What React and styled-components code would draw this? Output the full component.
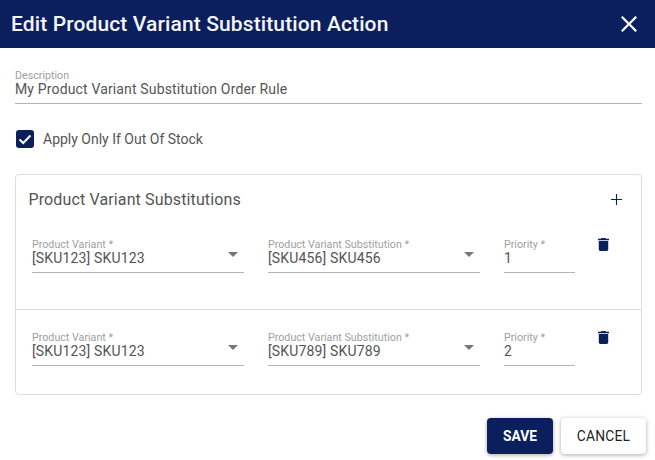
import React from "react";
import styled, { createGlobalStyle } from "styled-components";

const Global = createGlobalStyle`
  html, body { margin: 0; padding: 0; background: #fff; }
  body { font-family: Roboto, "Liberation Sans", sans-serif; width: 655px; height: 460px; overflow: hidden; }
  * { box-sizing: border-box; }
`;
const Dialog = styled.div`width: 655px; height: 460px; display: flex; flex-direction: column; background: #fff;`;
const Header = styled.header`height: 48px; background: #0a1f5c; color: #f4f5f8; display: flex; align-items: center; justify-content: space-between; padding: 0 18px 0 11px;`;
const Title = styled.h2`margin: 0; font-size: 21px; font-weight: 500; letter-spacing: 0.12px;`;
const Close = styled.button`border: 0; background: none; padding: 0; width: 16px; height: 16px; display: flex; color: #fff;`;
const Body = styled.div`flex: 1; display: flex; flex-direction: column; padding: 20px 9px 0 15px;`;
const Field = styled.div`display: flex; flex-direction: column; position: relative; width: ${p => p.$w || "100%"}; height: 36px; border-bottom: 1px solid #b5b5b5;`;
const Label = styled.label`font-size: 10.7px; line-height: 11px; color: #a0a0a0; padding-top: 2px;`;
const Value = styled.div`font-size: 14px; line-height: 16px; letter-spacing: 0.15px; color: #555;`;
const CheckRow = styled.div`display: flex; align-items: center; gap: 9px; margin-top: 25px; padding-left: 1px; height: 20px; font-size: 14px; color: #555; letter-spacing: 0;`;
const Box = styled.span`width: 18px; height: 18px; border-radius: 3px; background: #0a1f5c; display: flex;`;
const Card = styled.section`margin-top: 25px; width: 627px; height: 221px; border: 1px solid #ddd; border-radius: 4px;`;
const CardHead = styled.div`display: flex; align-items: center; justify-content: space-between; height: 48px; padding: 0 19px 0 12.5px; font-size: 16px; color: #555; letter-spacing: 0.13px;`;
const Row = styled.div`height: ${p => p.$h}px; display: grid; grid-template-columns: 212px 212px 71px 20px; column-gap: 24px; padding: ${p => p.$top}px 0 0 16px; border-bottom: ${p => p.$line ? "1px solid #ddd" : "0"};`;
const Arrow = styled.span`position: absolute; right: 6px; top: 15px; border-left: 5px solid transparent; border-right: 5px solid transparent; border-top: 5px solid #777;`;
const Trash = styled.span`display: flex; padding-top: 1px; margin-left: -1px;`;
const Footer = styled.footer`display: flex; justify-content: flex-end; gap: 8px; padding-top: 23px;`;
const Btn = styled.button`height: 36px; border: 0; border-radius: 4px; font: ${p => p.$primary ? 700 : 400} 13.8px Roboto, sans-serif; letter-spacing: ${p => p.$primary ? 0 : "0.2px"}; width: ${p => p.$w}px; background: ${p => p.$primary ? "#0a1f5c" : "#fff"}; color: ${p => p.$primary ? "#fff" : "#222"}; box-shadow: 0 1px 4px rgba(0,0,0,.35);`;

const TrashIcon = () => <svg width="11" height="13" viewBox="5 3 14 18" preserveAspectRatio="none" fill="#0a1f5c"><path d="M6 19c0 1.1.9 2 2 2h8c1.1 0 2-.9 2-2V7H6v12zM19 4h-3.5l-1-1h-5l-1 1H5v2h14V4z"/></svg>;

const Variant = ({ line, h, top, sub, pr }) => (
  <Row $line={line} $h={h} $top={top}>
    <Field><Label>Product Variant *</Label><Value>[SKU123] SKU123</Value><Arrow /></Field>
    <Field><Label>Product Variant Substitution *</Label><Value>{sub}</Value><Arrow /></Field>
    <Field><Label>Priority *</Label><Value>{pr}</Value></Field>
    <Trash><TrashIcon /></Trash>
  </Row>
);

export default function App() {
  return (
    <Dialog>
      <Global />
      <Header>
        <Title>Edit Product Variant Substitution Action</Title>
        <Close aria-label="close"><svg width="16" height="16" viewBox="5 5 14 14" fill="currentColor"><path d="M19 6.41 17.59 5 12 10.59 6.41 5 5 6.41 10.59 12 5 17.59 6.41 19 12 13.41 17.59 19 19 17.59 13.41 12z"/></svg></Close>
      </Header>
      <Body>
        <Field $w="627px"><Label>Description</Label><Value>My Product Variant Substitution Order Rule</Value></Field>
        <CheckRow>
          <Box><svg width="18" height="18" viewBox="0 0 18 18" fill="none" stroke="#fff" strokeWidth="2"><path d="M3.5 9.5 7.2 13 14.5 5.5"/></svg></Box>
          Apply Only If Out Of Stock
        </CheckRow>
        <Card>
          <CardHead>Product Variant Substitutions
            <svg width="11" height="11" viewBox="0 0 11 11" stroke="#0a1f5c" strokeWidth="1.1"><path d="M5.5 0v11M0 5.5h11"/></svg>
          </CardHead>
          <Variant line h={87} top={14} sub="[SKU456] SKU456" pr="1" />
          <Variant h={84} top={20} sub="[SKU789] SKU789" pr="2" />
        </Card>
        <Footer><Btn $primary $w={66}>SAVE</Btn><Btn $w={85}>CANCEL</Btn></Footer>
      </Body>
    </Dialog>
  );
}
